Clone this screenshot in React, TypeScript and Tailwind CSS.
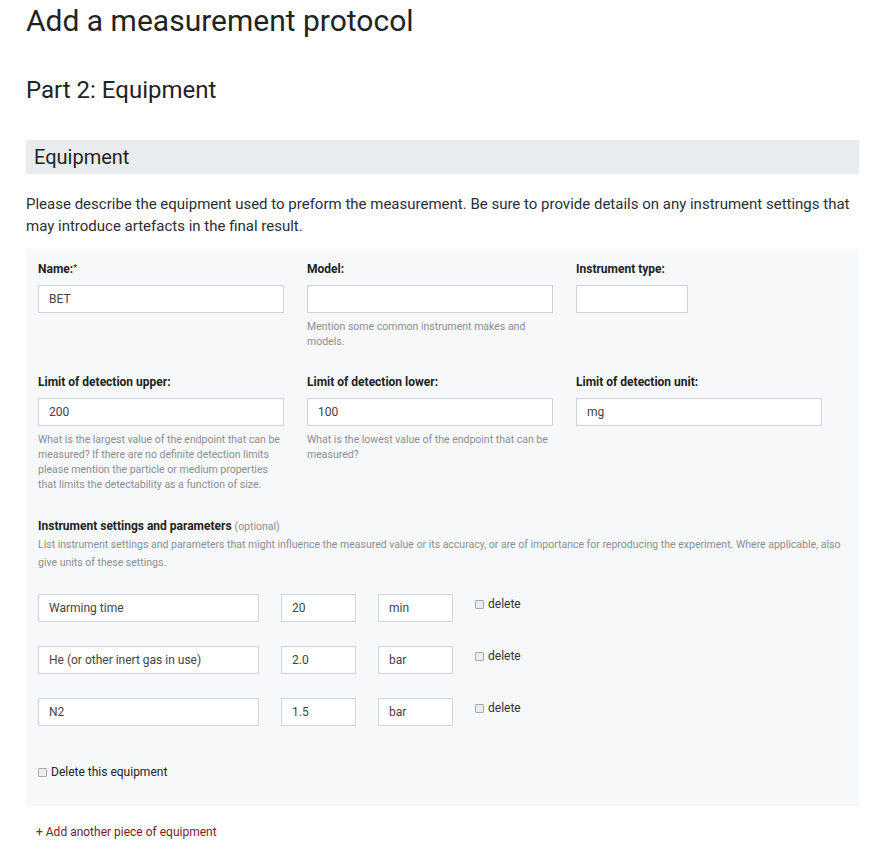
import React from "react";

const font = { fontFamily: "Roboto, 'Liberation Sans', sans-serif" };

function Field({
  label,
  value = "",
  help,
  inputClass = "w-[246px]",
  required,
}: {
  label: string;
  value?: string;
  help?: string;
  inputClass?: string;
  required?: boolean;
}) {
  return (
    <div className="flex flex-col">
      <label className="text-[12px] font-bold leading-[17px] text-[#222]">
        {label}
        {required && <sup className="relative -top-[2px] text-[9px] font-normal">*</sup>}
      </label>
      <input
        readOnly
        value={value}
        className={`mt-[7px] h-[28px] border border-[#cfd4da] bg-white px-[10px] text-[12px] text-[#444] outline-none ${inputClass}`}
      />
      {help && (
        <p className="mt-[6px] text-[10.5px] leading-[15px] text-[#8a8f94]">{help}</p>
      )}
    </div>
  );
}

function ParamRow({ name, value, unit }: { name: string; value: string; unit: string }) {
  return (
    <div className="flex items-start">
      <input
        readOnly
        value={name}
        className="h-[28px] w-[221px] border border-[#cfd4da] bg-white px-[10px] text-[12px] text-[#444] outline-none"
      />
      <input
        readOnly
        value={value}
        className="ml-[22px] h-[28px] w-[75px] border border-[#cfd4da] bg-white px-[10px] text-[12px] text-[#444] outline-none"
      />
      <input
        readOnly
        value={unit}
        className="ml-[22px] h-[28px] w-[75px] border border-[#cfd4da] bg-white px-[10px] text-[12px] text-[#444] outline-none"
      />
      <label className="ml-[22px] mt-[1px] flex items-center gap-[4px] text-[12px] text-[#333]">
        <span className="inline-block h-[9px] w-[9px] rounded-[1px] border border-[#a8a8a8] bg-[#ededed]" />
        delete
      </label>
    </div>
  );
}

export default function App() {
  return (
    <div className="min-h-screen bg-white px-[26px] pb-[10px] text-[#212529]" style={font}>
      <h1 className="pt-[3px] text-[30px] font-normal leading-[36px] text-[#1f2326]">
        Add a measurement protocol
      </h1>
      <h2 className="mt-[37px] text-[24px] font-normal leading-[28px] text-[#1f2326]">
        Part 2: Equipment
      </h2>

      <div className="mt-[36px] flex h-[34px] w-[833px] items-center bg-[#e9ecef] px-[8px]">
        <h3 className="text-[20px] font-normal leading-[24px] text-[#1f2326]">Equipment</h3>
      </div>

      <p className="mt-[19px] w-[833px] text-[15px] leading-[22px] text-[#2b2f33]">
        Please describe the equipment used to preform the measurement. Be sure to provide
        details on any instrument settings that may introduce artefacts in the final result.
      </p>

      <div className="mt-[12px] w-[833px] bg-[#f7f8fa] px-[12px] pb-[25px] pt-[12px]">
        <div className="grid grid-cols-[246px_246px_246px] gap-x-[23px] gap-y-[25px]">
          <Field label="Name:" value="BET" required />
          <Field
            label="Model:"
            help="Mention some common instrument makes and models."
          />
          <Field label="Instrument type:" inputClass="w-[112px]" />
          <Field
            label="Limit of detection upper:"
            value="200"
            help="What is the largest value of the endpoint that can be measured? If there are no definite detection limits please mention the particle or medium properties that limits the detectability as a function of size."
          />
          <Field
            label="Limit of detection lower:"
            value="100"
            help="What is the lowest value of the endpoint that can be measured?"
          />
          <Field label="Limit of detection unit:" value="mg" />
        </div>

        <div className="mt-[26px]">
          <p className="text-[12px] leading-[17px] text-[#222]">
            <span className="font-bold">Instrument settings and parameters</span>{" "}
            <span className="text-[10.5px] text-[#8a8f94]">(optional)</span>
          </p>
          <p className="mt-[1px] text-[10.5px] leading-[18px] text-[#8a8f94]">
            List instrument settings and parameters that might influence the measured value or
            its accuracy, or are of importance for reproducing the experiment. Where applicable,
            also give units of these settings.
          </p>
        </div>

        <div className="mt-[22px] flex flex-col gap-[24px]">
          <ParamRow name="Warming time" value="20" unit="min" />
          <ParamRow name="He (or other inert gas in use)" value="2.0" unit="bar" />
          <ParamRow name="N2" value="1.5" unit="bar" />
        </div>

        <label className="mt-[37px] flex items-center gap-[4px] text-[12px] text-[#222]">
          <span className="inline-block h-[9px] w-[9px] rounded-[1px] border border-[#a8a8a8] bg-[#ededed]" />
          Delete this equipment
        </label>
      </div>

      <a href="#" className="mt-[17px] ml-[10px] block text-[12px] text-[#7d1a2b]">
        + Add another piece of equipment
      </a>
    </div>
  );
}
